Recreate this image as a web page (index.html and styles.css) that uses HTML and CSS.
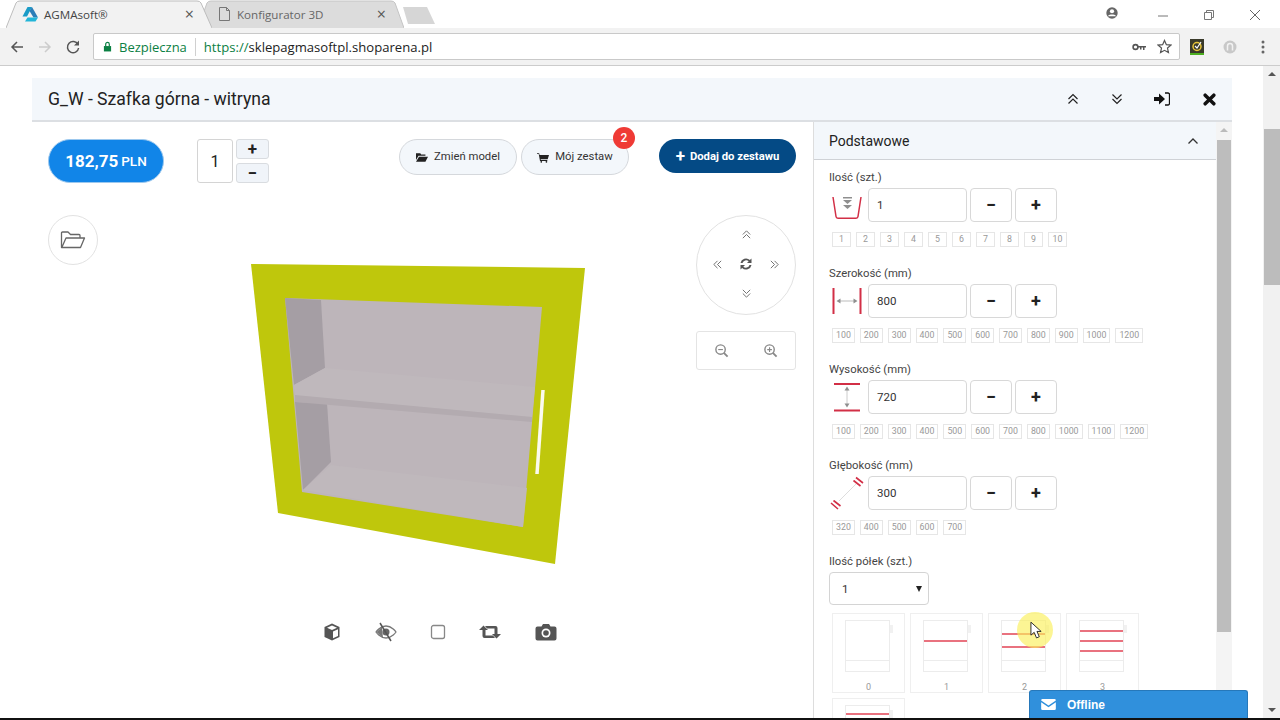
FILE: index.html
```html
<!DOCTYPE html>
<html lang="pl">
<head>
<meta charset="utf-8">
<title>AGMAsoft</title>
<link rel="stylesheet" href="styles.css">
</head>
<body>
<div class="browser">
  <header class="tabbar">
    <div class="tab tab-active">
      <svg class="tab-bg" viewBox="0 0 206 28" preserveAspectRatio="none"><path d="M0 28 L10 3 Q11 1 14 1 H191 Q194 1 195 3 L206 28" fill="#f2f2f2" stroke="#bdbdbd"/></svg>
      <svg class="tab-ico" viewBox="0 0 16 16"><path d="M5.500 1h4.500L5 10.500H0.500z" fill="#1a9cc7"/><path d="M10 1 16 11.500h-4.500L7.500 5z" fill="#2a7db8"/><path d="M5.500 11.500H16L13.500 15.500H3z" fill="#22b5d8"/></svg>
      <span class="tab-title tab-title-active">AGMAsoft®</span>
      <span class="tab-x">×</span>
    </div>
    <div class="tab tab-off">
      <svg class="tab-bg" viewBox="0 0 206 28" preserveAspectRatio="none"><path d="M0 28 L9 3 Q10 1 13 1 H193 Q196 1 197 3 L206 28" fill="#dcdcdc" stroke="#c4c4c4"/></svg>
      <svg class="tab-ico" viewBox="0 0 13 16"><path d="M1.500 1.500H8.500L11.500 4.500V14.500H1.500z M8.500 1.500V4.500H11.500" fill="none" stroke="#777"/></svg>
      <span class="tab-title">Konfigurator 3D</span>
      <span class="tab-x">×</span>
    </div>
    <svg class="newtab" viewBox="0 0 33 17"><path d="M1 0H25L33 17H6z" fill="#d6d6d6"/></svg>
    <div class="winctl">
      <svg class="profile" viewBox="0 0 16 16"><circle cx="8" cy="8" r="6.500" fill="#666"/><circle cx="8" cy="6" r="2.400" fill="#fff"/><path d="M3.600 11.200c1.400-2 7.400-2 8.800 0v.6H3.600z" fill="#fff"/></svg>
      <svg class="win win-min" viewBox="0 0 12 12"><path d="M1 7H11" stroke="#777"/></svg>
      <svg class="win win-max" viewBox="0 0 12 12"><path d="M1.500 3.500h7v7h-7z M3.500 3.500v-2h7v7h-2" fill="none" stroke="#777"/></svg>
      <svg class="win win-close" viewBox="0 0 12 12"><path d="M1 1 11 11M11 1 1 11" stroke="#666"/></svg>
    </div>
  </header>
  <div class="toolbar">
    <svg class="nav" viewBox="0 0 16 16"><path d="M14 8H3M8 3 3 8l5 5" fill="none" stroke="#555" stroke-width="1.500"/></svg>
    <svg class="nav" viewBox="0 0 16 16"><path d="M2 8H13M8 3l5 5-5 5" fill="none" stroke="#ccc" stroke-width="1.500"/></svg>
    <svg class="nav" viewBox="0 0 16 16"><path d="M13 5.500A5.600 5.600 0 1 0 13.600 9" fill="none" stroke="#555" stroke-width="1.500"/><path d="M14 1.500V6.500H9z" fill="#555"/></svg>
    <div class="omnibox">
      <svg class="lock" viewBox="0 0 10 12"><path d="M1 5.500h8V11.500H1z" fill="#0b8043"/><path d="M3 5.500V3.500a2 2 0 0 1 4 0v2" fill="none" stroke="#0b8043" stroke-width="1.300"/></svg>
      <span class="secure">Bezpieczna</span>
      <span class="omni-sep"></span>
      <span class="url"><span class="url-https">https://</span>sklepagmasoftpl.shoparena.pl</span>
      <svg class="omni-key" viewBox="0 0 14 8"><circle cx="3.500" cy="4" r="2.400" fill="none" stroke="#555" stroke-width="1.600"/><path d="M6 3h8v1.600h-1.500V7h-1.500V4.600H9.500V6.500H8V4.600H6z" fill="#555"/></svg>
      <svg class="omni-star" viewBox="0 0 16 16"><path d="m8 1.500 2 4.500 4.800.5-3.600 3.200 1 4.800L8 12.100 3.800 14.500l1-4.800L1.200 6.500 6 6z" fill="none" stroke="#555" stroke-width="1.300"/></svg>
    </div>
    <svg class="ext ext-1" viewBox="0 0 14 16"><path d="M0 0H14V14H0z" fill="#3a3a2a"/><path d="M0 14H14V16H0z" fill="#4caf20"/><circle cx="7" cy="7.500" r="4" fill="none" stroke="#e8c43a" stroke-width="1.500"/><path d="m5 7 2 2 4-6" fill="none" stroke="#fff" stroke-width="1.200"/></svg>
    <svg class="ext ext-2" viewBox="0 0 14 14"><circle cx="7" cy="7" r="6.500" fill="#c8c8c8"/><path d="M4.500 10.500V6a2.500 2.500 0 0 1 5 0v4.500" fill="none" stroke="#f2f2f2" stroke-width="1.500"/></svg>
    <svg class="ext ext-3" viewBox="0 0 4 14"><circle cx="2" cy="2" r="1.500" fill="#666"/><circle cx="2" cy="7" r="1.500" fill="#666"/><circle cx="2" cy="12" r="1.500" fill="#666"/></svg>
  </div>

  <main class="viewport">
    <section class="modal">
      <div class="modal-head">
        <h1 class="modal-title">G_W - Szafka górna - witryna</h1>
        <div class="modal-actions">
          <svg class="act act-1" viewBox="0 0 12 12"><path d="M1.500 6 6 1.500 10.500 6M1.500 10.500 6 6l4.500 4.500" fill="none" stroke="#222" stroke-width="1.200"/></svg>
          <svg class="act act-2" viewBox="0 0 12 12"><path d="M1.500 1.500 6 6l4.500-4.500M1.500 6 6 10.500 10.500 6" fill="none" stroke="#222" stroke-width="1.200"/></svg>
          <svg class="act act-3" viewBox="0 0 16 14"><path d="M0 5H5V1.500L11 7 5 12.500V9H0z" fill="#111"/><path d="M11 1h3a1.500 1.500 0 0 1 1.500 1.500v9A1.500 1.500 0 0 1 14 13h-3" fill="none" stroke="#111" stroke-width="1.300"/></svg>
          <svg class="act act-4" viewBox="0 0 12 12"><path d="M2 2 10 10M10 2 2 10" stroke="#111" stroke-width="3.200" stroke-linecap="round"/></svg>
        </div>
      </div>
      <div class="modal-body">
        <div class="stage-pane">
          <div class="top-row">
            <div class="price"><b>182,75</b> <span>PLN</span></div>
            <div class="qty">
              <div class="qty-value">1</div>
              <div class="qty-btns">
                <button class="qty-btn">+</button>
                <button class="qty-btn">−</button>
              </div>
            </div>
            <div class="top-actions">
              <button class="pill">
                <svg class="pill-ico" viewBox="0 0 14 12"><path d="M0 1h5l1 1.500h5V4H3L0 9zM3.500 5H14l-3 6H0z" fill="#222"/></svg>Zmień model
              </button>
              <button class="pill pill-cart">
                <svg class="pill-ico" viewBox="0 0 14 12"><path d="M0 1h2.500L3 3h11l-1.500 5H4.200L4.500 9H12v1H3.500L2 2H0z" fill="#222"/><circle cx="5" cy="11" r="1" fill="#222"/><circle cx="11" cy="11" r="1" fill="#222"/></svg>Mój zestaw
                <span class="badge">2</span>
              </button>
              <button class="add"><span class="add-plus">+</span>Dodaj do zestawu</button>
            </div>
          </div>
          <div class="stage">
            <div class="folder-round">
              <svg class="folder" viewBox="0 0 26 18"><path d="M4 16.500H1.500V2a1 1 0 0 1 1-1H8l2.500 2.500H19a1 1 0 0 1 1 1V7M6 7H24.500L20.500 16.500H1.800z" fill="none" stroke="#666" stroke-width="1.300" stroke-linejoin="round"/></svg>
            </div>
            <div class="stage-center">
              <svg class="cabinet" viewBox="98 215 598 400">
                <polygon points="251,264 585,268 555,564 278,513" fill="#bfc70c"/>
                <polygon points="285,298 542,307 523,527 302,492" fill="#bdb5ba"/>
                <polygon points="285,298 321,300 325,368 294,385" fill="#a59ea4"/>
                <polygon points="295,402 327,403 331,462 303,490" fill="#a59ea4"/>
                <polygon points="303,490 331,465 527,488 523,527" fill="#bfb8bc"/>
                <polygon points="294,385 325,368 535,387 532,417 295,396" fill="#bfb8bc"/>
                <polygon points="295,395 532,417 532,422 295,402" fill="#b3abb0"/>
                <line x1="543" y1="390" x2="537" y2="474" stroke="#fbfaf0" stroke-width="3.500"/>
              </svg>
              <div class="view-tools">
                <svg class="vt vt-cube" viewBox="0 0 20 20"><path d="M10 1.500 17.500 5v10L10 18.500 2.500 15V5z" fill="#555"/><path d="M10 3.500 15 5.700 10 8 5 5.700z" fill="#fff"/><path d="M11 9.500 16 7.300V14L11 16.300z" fill="#fff"/></svg>
                <svg class="vt vt-eye" viewBox="0 0 22 20"><path d="M1 10s4-6 10-6 10 6 10 6-4 6-10 6S1 10 1 10z" fill="none" stroke="#777" stroke-width="1.300"/><path d="M1.500 10 7 5l1 11z" fill="#777"/><circle cx="11" cy="10" r="3.500" fill="#666"/><path d="M5 1 16 19" stroke="#555" stroke-width="1.500"/></svg>
                <svg class="vt vt-sq" viewBox="0 0 16 16"><rect x="1.500" y="1.500" width="13" height="13" rx="2" fill="none" stroke="#888" stroke-width="1.300"/></svg>
                <svg class="vt vt-rt" viewBox="0 0 22 16"><path d="M0 6 4.500 1.500 9 6H6.500v5.500H14l2 2.500H5.500a2 2 0 0 1-2-2V6z" fill="#555"/><path d="M22 10 17.500 14.500 13 10h2.500V4.500H8L6 2h10.500a2 2 0 0 1 2 2V10z" fill="#555"/></svg>
                <svg class="vt vt-cam" viewBox="0 0 22 18"><path d="M2.500 3.500H6.500L8 1h6l1.500 2.500h4a2 2 0 0 1 2 2v10a2 2 0 0 1-2 2h-17a2 2 0 0 1-2-2v-10a2 2 0 0 1 2-2z" fill="#555"/><circle cx="11" cy="10" r="4.500" fill="#fff"/><circle cx="11" cy="10" r="2.800" fill="#555"/></svg>
              </div>
            </div>
            <div class="stage-right">
              <div class="compass">
                <svg class="cp-ico" viewBox="0 0 12 12"><path d="M2 6 6 2l4 4M2 10 6 6l4 4" fill="none" stroke="#666"/></svg>
                <div class="compass-mid">
                  <svg class="cp-ico" viewBox="0 0 12 12"><path d="M6 2 2 6l4 4M10 2 6 6l4 4" fill="none" stroke="#666"/></svg>
                  <svg class="cp-sync" viewBox="0 0 14 14"><path d="M1.500 6a5.600 5.600 0 0 1 9.400-3L12.500 1.500V6H8l1.700-1.700A3.800 3.800 0 0 0 3.500 6zM12.500 8a5.600 5.600 0 0 1-9.400 3L1.500 12.500V8H6L4.300 9.700A3.800 3.800 0 0 0 10.500 8z" fill="#555"/></svg>
                  <svg class="cp-ico" viewBox="0 0 12 12"><path d="M2 2l4 4-4 4M6 2l4 4-4 4" fill="none" stroke="#666"/></svg>
                </div>
                <svg class="cp-ico" viewBox="0 0 12 12"><path d="M2 2l4 4 4-4M2 6l4 4 4-4" fill="none" stroke="#666"/></svg>
              </div>
              <div class="zoom-box">
                <svg class="zoom-ico" viewBox="0 0 16 16"><circle cx="7" cy="7" r="5" fill="none" stroke="#888" stroke-width="1.500"/><path d="m10.500 10.500 4 4" stroke="#888" stroke-width="2"/><path d="M4.500 7h5" stroke="#888" stroke-width="1.200"/></svg>
                <svg class="zoom-ico" viewBox="0 0 16 16"><circle cx="7" cy="7" r="5" fill="none" stroke="#888" stroke-width="1.500"/><path d="m10.500 10.500 4 4" stroke="#888" stroke-width="2"/><path d="M4.500 7h5M7 4.500v5" stroke="#888" stroke-width="1.200"/></svg>
              </div>
            </div>
          </div>
        </div>

        <aside class="options">
          <div class="options-scroll">
            <div class="acc-head">
              <span>Podstawowe</span>
              <svg class="acc-caret" viewBox="0 0 12 8"><path d="M1.500 6.500 6 2l4.500 4.500" fill="none" stroke="#333" stroke-width="1.300"/></svg>
            </div>
            <div class="acc-body">
              <div class="field">
                <div class="field-label">Ilość (szt.)</div>
                <div class="field-row">
                  <svg class="dim" viewBox="832 190 30 30"><path d="M833 197 836 216.500a2 2 0 0 0 2 1.800H856a2 2 0 0 0 2-1.800L861 197" fill="none" stroke="#d22f46" stroke-width="1.500"/><path d="M843 197h9v1.500h-9zM843 200h9l-4.500 4zM843 205h9l-4.500 4z" fill="#8f8f8f"/></svg>
                  <div class="num-input">1</div>
                  <button class="step">−</button>
                  <button class="step">+</button>
                </div>
                <div class="chips"><span class="chip">1</span><span class="chip">2</span><span class="chip">3</span><span class="chip">4</span><span class="chip">5</span><span class="chip">6</span><span class="chip">7</span><span class="chip">8</span><span class="chip">9</span><span class="chip">10</span></div>
              </div>
              <div class="field">
                <div class="field-label">Szerokość (mm)</div>
                <div class="field-row">
                  <svg class="dim" viewBox="832 286 30 30"><path d="M833.500 288V314M860.500 288V314" stroke="#d22f46" stroke-width="2"/><path d="M840 301H855" stroke="#bbb"/><path d="M836.500 301 840.500 298.500v5zM857.500 301 853.500 298.500v5z" fill="#8f8f8f"/></svg>
                  <div class="num-input">800</div>
                  <button class="step">−</button>
                  <button class="step">+</button>
                </div>
                <div class="chips"><span class="chip">100</span><span class="chip">200</span><span class="chip">300</span><span class="chip">400</span><span class="chip">500</span><span class="chip">600</span><span class="chip">700</span><span class="chip">800</span><span class="chip">900</span><span class="chip">1000</span><span class="chip">1200</span></div>
              </div>
              <div class="field">
                <div class="field-label">Wysokość (mm)</div>
                <div class="field-row">
                  <svg class="dim" viewBox="832 382 30 30"><path d="M834 384H860M834 410.500H860" stroke="#d22f46" stroke-width="2"/><path d="M847 390V405" stroke="#ccc"/><path d="M847 386.500 844.500 390.500h5zM847 407.500 844.500 403.500h5z" fill="#8f8f8f"/></svg>
                  <div class="num-input">720</div>
                  <button class="step">−</button>
                  <button class="step">+</button>
                </div>
                <div class="chips"><span class="chip">100</span><span class="chip">200</span><span class="chip">300</span><span class="chip">400</span><span class="chip">500</span><span class="chip">600</span><span class="chip">700</span><span class="chip">800</span><span class="chip">1000</span><span class="chip">1100</span><span class="chip">1200</span></div>
              </div>
              <div class="field">
                <div class="field-label">Głębokość (mm)</div>
                <div class="field-row">
                  <svg class="dim dim-depth" viewBox="832 478 30 30"><path d="M856 477.500 863 483M853.500 480.500 860.500 486M831 503 838 509M833.500 500.500 840.500 506" stroke="#d22f46" stroke-width="1.600"/><path d="M839 501 856 484" stroke="#ddd"/></svg>
                  <div class="num-input">300</div>
                  <button class="step">−</button>
                  <button class="step">+</button>
                </div>
                <div class="chips"><span class="chip">320</span><span class="chip">400</span><span class="chip">500</span><span class="chip">600</span><span class="chip">700</span></div>
              </div>
              <div class="field field-select">
                <div class="field-label">Ilość półek (szt.)</div>
                <div class="select"><span>1</span><span class="select-arrow"></span></div>
                <div class="thumbs">
                  <div class="thumb"><div class="shelf-box"><div class="shelf-front"></div><div class="shelf-base"></div></div><span class="thumb-num">0</span></div>
                  <div class="thumb"><div class="shelf-box"><div class="shelf-front shelf-1"><i></i></div><div class="shelf-base"></div></div><span class="thumb-num">1</span></div>
                  <div class="thumb"><div class="shelf-box"><div class="shelf-front shelf-2"><i></i><i></i></div><div class="shelf-base"></div></div><span class="thumb-num">2</span></div>
                  <div class="thumb"><div class="shelf-box"><div class="shelf-front shelf-3"><i></i><i></i><i></i></div><div class="shelf-base"></div></div><span class="thumb-num">3</span></div>
                  <div class="thumb"><div class="shelf-box"><div class="shelf-front shelf-4"><i></i></div><div class="shelf-base"></div></div></div>
                </div>
              </div>
            </div>
          </div>
          <div class="inner-scrollbar">
            <span class="sb-up"></span>
            <div class="inner-thumb"></div>
          </div>
        </aside>
      </div>
    </section>
    <div class="page-scrollbar">
      <span class="sb-up"></span>
      <div class="page-thumb"></div>
      <span class="sb-down"></span>
    </div>
  </main>
  <div class="black-edge"></div>
</div>

<div class="cursor-glow"></div>
<svg class="cursor" viewBox="0 0 14 20"><path d="M1 1V15L4.500 12 7 18l3-1.300L7.500 11H12z" fill="#fff" stroke="#222"/></svg>
<div class="chat">
  <svg class="chat-ico" viewBox="0 0 16 12"><path d="M1.500 0h13A1.500 1.500 0 0 1 16 1.500L8 7 0 1.500A1.500 1.500 0 0 1 1.500 0zM0 3.500 8 9l8-5.500V10.500A1.500 1.500 0 0 1 14.500 12h-13A1.500 1.500 0 0 1 0 10.500z" fill="#fff"/></svg>
  <span>Offline</span>
</div>
</body>
</html>
```
FILE: styles.css
```css
* { box-sizing: border-box; }
html, body { margin: 0; padding: 0; height: 720px; overflow: hidden; background: #fff; }
body { font-family: Roboto, "Noto Sans", sans-serif; color: #333; position: relative; }
button { font-family: inherit; cursor: pointer; padding: 0; }
svg { display: block; flex: none; }

.browser { height: 720px; display: flex; flex-direction: column; }

/* Tabs */
.tabbar { height: 28px; flex: none; display: flex; align-items: flex-end; padding-left: 6px; background: #fff; position: relative; z-index: 1; margin-bottom: -1px; }
.tab { position: relative; height: 28px; width: 206px; display: flex; align-items: center; font-family: "Open Sans", sans-serif; font-size: 11.600px; }
.tab-bg { position: absolute; left: 0; top: 0; width: 100%; height: 100%; }
.tab-active { padding-left: 16px; z-index: 2; }
.tab-off { padding-left: 20px; margin-left: -14px; }
.tab-ico { position: relative; width: 16px; height: 16px; margin-right: 6px; }
.tab-off .tab-ico { width: 13px; margin-right: 6px; }
.tab-title { position: relative; color: #666; flex: 1; white-space: nowrap; }
.tab-title-active { color: #444; }
.tab-x { position: relative; color: #555; font-size: 16px; margin-right: 18px; line-height: 1; }
.newtab { width: 33px; height: 17px; margin: 0 0 4px -2px; }
.winctl { margin-left: auto; height: 28px; display: flex; align-items: flex-start; padding-top: 6px; padding-right: 19px; }
.profile { width: 14px; height: 14px; margin-right: 38px; }
.win { width: 12px; height: 12px; margin-top: 3px; }
.win-min { margin-right: 34px; }
.win-max { margin-right: 34px; }

/* Toolbar */
.toolbar { height: 39px; flex: none; background: #f2f2f2; border-top: 1px solid #c8c8c8; border-bottom: 1px solid #ccc; display: flex; align-items: center; padding: 0 0 0 9px; }
.nav { width: 16px; height: 16px; margin-right: 12px; }
.omnibox { width: 1087px; height: 27px; background: #fff; border: 1px solid #c9c9c9; border-radius: 2px; display: flex; align-items: center; padding: 0 7px 0 9px; }
.lock { width: 9px; height: 11px; margin: 0 7px 0 0; }
.secure { color: #0b8043; font-family: "Open Sans", sans-serif; font-size: 13px; }
.omni-sep { width: 1px; height: 18px; background: #d0d0d0; margin: 0 8px; }
.url { font-family: "Open Sans", sans-serif; font-size: 13.100px; color: #222; flex: 1; }
.url-https { color: #0b8043; }
.omni-key { width: 14px; height: 8px; margin-right: 11px; }
.omni-star { width: 15px; height: 15px; }
.ext { flex: none; }
.ext-1 { width: 14px; height: 16px; margin-left: 10px; }
.ext-2 { width: 14px; height: 14px; margin-left: 19px; }
.ext-3 { width: 4px; height: 14px; margin-left: 24px; }

/* Page */
.viewport { flex: 1; min-height: 0; display: flex; padding: 12px 0 0 32px; position: relative; }
.modal { width: 1200px; display: flex; flex-direction: column; }
.modal-head { height: 44px; flex: none; background: #f3f7fb; border-bottom: 2px solid #dcdfe3; display: flex; align-items: center; justify-content: space-between; padding: 0 16px 0 16px; }
.modal-title { margin: 0; font-size: 17.600px; font-weight: 400; color: #222; }
.modal-actions { display: flex; align-items: center; }
.act-1 { width: 12px; height: 12px; }
.act-2 { width: 12px; height: 12px; margin-left: 32px; }
.act-3 { width: 16px; height: 14px; margin-left: 31px; }
.act-4 { width: 13px; height: 13px; margin-left: 33px; }
.modal-body { flex: 1; min-height: 0; display: flex; }

.stage-pane { width: 781px; flex: none; padding: 17px 17px 0 16px; display: flex; flex-direction: column; }
.top-row { display: flex; align-items: flex-start; height: 44px; }
.price { width: 116px; height: 44px; border-radius: 22px; background: #1185e8; border: 1px solid #9cc8ee; color: #fff; display: flex; align-items: center; justify-content: center; gap: 3px; font-size: 17px; }
.price b { font-weight: 700; }
.price span { font-size: 13.500px; font-weight: 500; }
.qty { display: flex; margin-left: 33px; gap: 3px; }
.qty-value { width: 36px; height: 44px; background: #fff; border: 1px solid #d4d4d4; border-radius: 3px; display: flex; align-items: center; justify-content: center; font-size: 16px; color: #222; }
.qty-btns { display: flex; flex-direction: column; justify-content: space-between; height: 44px; }
.qty-btn { width: 33px; height: 20px; background: #f0f4f9; border: 1px solid #d9dce0; border-radius: 3px; font-size: 17px; font-weight: 700; line-height: 16px; color: #222; }
.top-actions { margin-left: auto; display: flex; align-items: flex-start; }
.pill { position: relative; height: 36px; border-radius: 18px; background: #f3f7fb; border: 1px solid #d5d8dc; display: flex; align-items: center; justify-content: center; gap: 6px; font-size: 11.300px; line-height: 32px; color: #333; width: 118px; }
.pill-cart { width: 108px; margin-left: 4px; }
.pill-ico { width: 12px; height: 11px; }
.badge { position: absolute; right: -7px; top: -13px; width: 22px; height: 22px; border-radius: 50%; background: #ef3a35; color: #fff; font-size: 12px; font-weight: 500; display: flex; align-items: center; justify-content: center; }
.add { height: 34px; width: 137px; margin-left: 30px; border: 0; border-radius: 17px; background: #044a85; color: #fff; font-size: 11.300px; font-weight: 700; display: flex; align-items: center; justify-content: center; gap: 5px; }
.add-plus { font-size: 17px; line-height: 1; }

.stage { display: flex; margin-top: 32px; }
.folder-round { width: 50px; height: 50px; flex: none; border-radius: 50%; border: 1px solid #e2e2e2; display: flex; align-items: center; justify-content: center; }
.folder { width: 26px; height: 18px; }
.stage-center { width: 598px; flex: none; }
.cabinet { width: 598px; height: 400px; }
.view-tools { display: flex; align-items: center; gap: 33px; margin: 7px 0 0 224px; height: 20px; }
.vt-cube { width: 20px; height: 20px; }
.vt-eye { width: 22px; height: 20px; }
.vt-sq { width: 16px; height: 16px; }
.vt-rt { width: 22px; height: 16px; }
.vt-cam { width: 22px; height: 18px; margin-left: 1px; }
.stage-right { width: 100px; flex: none; display: flex; flex-direction: column; gap: 16px; }
.compass { width: 100px; height: 100px; border-radius: 50%; border: 1px solid #e2e2e2; display: flex; flex-direction: column; align-items: center; justify-content: space-between; padding: 13px 0 15px; }
.compass-mid { width: 68px; display: flex; align-items: center; justify-content: space-between; }
.cp-ico { width: 11px; height: 11px; }
.cp-sync { width: 14px; height: 14px; }
.zoom-box { width: 100px; height: 39px; border: 1px solid #e4e4e4; border-radius: 3px; display: flex; align-items: center; justify-content: center; gap: 34px; }
.zoom-ico { width: 15px; height: 15px; }

/* Options */
.options { width: 419px; flex: none; border-left: 1px solid #ddd; display: flex; min-height: 0; overflow: hidden; }
.options-scroll { flex: 1; min-width: 0; overflow: hidden; }
.acc-head { height: 38px; background: #f3f7fb; border-bottom: 1px solid #cfd2d6; display: flex; align-items: center; justify-content: space-between; padding: 0 17px 0 15px; font-size: 14px; color: #222; }
.acc-caret { width: 12px; height: 8px; }
.acc-body { padding: 7px 15px 0; }
.field { height: 96px; }
.field-select { height: auto; }
.field-label { height: 20px; font-size: 11.300px; line-height: 22px; color: #444; margin-bottom: 1px; }
.field-row { display: flex; align-items: center; height: 34px; }
.dim { width: 30px; height: 30px; margin: 0 6px 0 3px; overflow: visible; }
.num-input { width: 99px; height: 34px; border: 1px solid #d8d8d8; border-radius: 4px; background: #fff; font-size: 11.500px; color: #333; display: flex; align-items: center; padding-left: 8px; }
.step { width: 42px; height: 34px; margin-left: 3px; background: #fff; border: 1px solid #d8d8d8; border-radius: 4px; font-size: 18px; font-weight: 700; color: #222; line-height: 1; }
.chips { display: flex; gap: 5px; margin: 10px 0 0 3px; }
.chip { min-width: 19px; height: 15px; padding: 0 3px; border: 1px solid #e6e6e6; font-size: 8.800px; line-height: 13px; color: #999; text-align: center; }
.select { width: 100px; height: 33px; border: 1px solid #d4d4d4; border-radius: 4px; display: flex; align-items: center; justify-content: space-between; padding: 0 6px 0 12px; font-size: 11.500px; color: #333; }
.select-arrow { width: 0; height: 0; border-left: 3px solid transparent; border-right: 3px solid transparent; border-top: 6px solid #222; }
.thumbs { display: flex; flex-wrap: wrap; gap: 5px; margin: 8px 0 0 3px; width: 320px; }
.thumb { width: 73px; height: 80px; border: 1px solid #efefef; display: flex; flex-direction: column; align-items: center; padding-top: 6px; }
.shelf-box { width: 45px; height: 52px; border: 1px solid #ececec; margin-right: 2px; position: relative; display: flex; flex-direction: column; }
.shelf-box::after { content: ""; position: absolute; right: -4px; top: 4px; width: 3px; height: 8px; background: #f1f1f1; }
.shelf-front { flex: 1; border-bottom: 1px solid #ececec; position: relative; display: flex; flex-direction: column; justify-content: center; }
.shelf-base { height: 10px; }
.shelf-front i { display: block; height: 2px; background: #e9727f; }
.shelf-2 { gap: 11px; }
.shelf-3 { gap: 8px; }
.shelf-4 { justify-content: flex-start; padding-top: 7px; }
.thumb-num { font-size: 9px; color: #999; margin-top: 10px; }

.inner-scrollbar { width: 16px; flex: none; background: #f4f4f4; position: relative; padding-top: 18px; }
.inner-thumb { width: 14px; height: 492px; margin: 0 1px; background: #bdbdbd; }
.page-scrollbar { position: absolute; right: 0; top: 0; bottom: 0; width: 17px; background: #f1f1f1; }
.page-thumb { position: absolute; left: 1px; right: 0; top: 63px; height: 156px; background: #bcbcbc; }
.sb-up, .sb-down { position: absolute; left: 50%; margin-left: -4px; width: 0; height: 0; border-left: 4px solid transparent; border-right: 4px solid transparent; }
.sb-up { top: 6px; border-bottom: 4px solid #555; }
.inner-scrollbar .sb-up { border-bottom-color: #bbb; }
.sb-down { bottom: 6px; border-top: 4px solid #555; }
.black-edge { height: 2px; flex: none; background: #111; position: relative; z-index: 3; }

/* Overlays */
.cursor-glow { position: absolute; left: 1017px; top: 612px; width: 36px; height: 36px; border-radius: 50%; background: rgba(250, 240, 90, 0.65); }
.cursor { position: absolute; left: 1030px; top: 621px; width: 13px; height: 19px; }
.chat { position: absolute; left: 1029px; top: 690px; width: 219px; height: 28px; background: #3090dc; border: 1px solid #2678ba; border-bottom: 0; border-radius: 3px 3px 0 0; display: flex; align-items: center; padding-left: 11px; color: #fff; font-family: "Liberation Sans", sans-serif; font-size: 12px; font-weight: 700; gap: 11px; }
.chat-ico { width: 15px; height: 11px; }
```
